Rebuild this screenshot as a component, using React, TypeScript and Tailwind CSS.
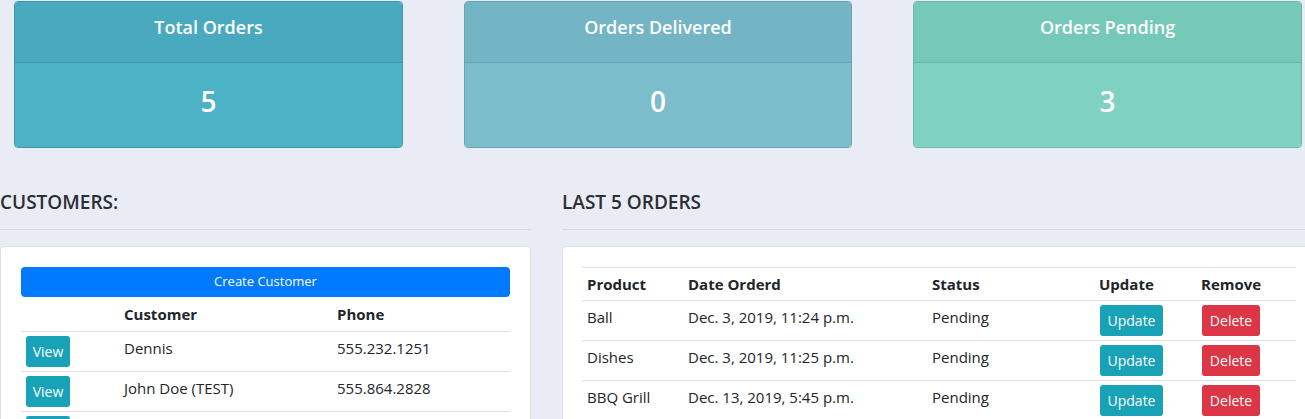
import React from "react";

const stats = [
  { title: "Total Orders", value: "5", w: "w-[389px]", head: "bg-[#49aabf]", body: "bg-[#4cb2c5]", border: "border-[#3f97ab]" },
  { title: "Orders Delivered", value: "0", w: "w-[388px]", head: "bg-[#74b5c5]", body: "bg-[#7bbdca]", border: "border-[#68a5b4]" },
  { title: "Orders Pending", value: "3", w: "w-[389px]", head: "bg-[#76c8b9]", body: "bg-[#7fd1c1]", border: "border-[#6bb8aa]" },
];

const customers = [
  { name: "Dennis", phone: "555.232.1251" },
  { name: "John Doe (TEST)", phone: "555.864.2828" },
  { name: "", phone: "" },
];

const orders = [
  { product: "Ball", date: "Dec. 3, 2019, 11:24 p.m.", status: "Pending" },
  { product: "Dishes", date: "Dec. 3, 2019, 11:25 p.m.", status: "Pending" },
  { product: "BBQ Grill", date: "Dec. 13, 2019, 5:45 p.m.", status: "Pending" },
];

export default function App() {
  return (
    <div
      className="w-[1305px] h-[419px] overflow-hidden bg-[#e9ecf4] text-[#212529]"
      style={{ fontFamily: '"Open Sans", "Noto Sans", sans-serif' }}
    >
      <div className="flex gap-[61px] pl-[14px] pt-[1px]">
        {stats.map((s) => (
          <div
            key={s.title}
            className={`${s.w} h-[147px] rounded-[4px] border ${s.border} overflow-hidden flex flex-col text-white`}
          >
            <div className={`${s.head} h-[61px] border-b ${s.border} flex justify-center pt-[12px]`}>
              <span className="text-[18px] font-semibold leading-[26px]">{s.title}</span>
            </div>
            <div className={`${s.body} flex-1 flex justify-center pt-[18px]`}>
              <span className="text-[28px] font-semibold leading-[40px]">{s.value}</span>
            </div>
          </div>
        ))}
      </div>

      <div className="flex gap-[31px] mt-[40px] w-[1340px]">
        <div className="w-[531px] shrink-0">
          <h5 className="text-[19px] font-semibold leading-[26px] pt-[1px] text-[#2b2e33]">CUSTOMERS:</h5>
          <div className="h-px bg-[#d6d9e0] mt-[14px] mb-[16px]" />
          <div className="bg-white border border-[#dfe1e6] rounded-[4px] h-[200px] px-[20px] pt-[20px]">
            <div className="h-[30px] rounded-[4px] bg-[#007bff] text-white text-[13px] flex items-center justify-center">
              Create Customer
            </div>
            <table className="w-full border-collapse text-[15px]">
              <thead>
                <tr className="h-[34px] text-left">
                  <th className="w-[99px]"></th>
                  <th className="w-[213px] pl-[4px] font-bold">Customer</th>
                  <th className="pl-[4px] font-bold">Phone</th>
                </tr>
              </thead>
              <tbody>
                {customers.map((c, i) => (
                  <tr key={i} className="h-[40px] border-t border-[#dee2e6] align-top">
                    <td className="pl-[5px] pt-[4px]">
                      <span className="inline-flex items-center justify-center w-[44px] h-[31px] rounded-[3px] bg-[#17a2b8] text-white text-[14px]">
                        View
                      </span>
                    </td>
                    <td className="pl-[4px] pt-[5px]">{c.name}</td>
                    <td className="pl-[4px] pt-[5px]">{c.phone}</td>
                  </tr>
                ))}
              </tbody>
            </table>
          </div>
        </div>

        <div className="flex-1">
          <h5 className="text-[19px] font-semibold leading-[26px] pt-[1px] text-[#2b2e33]">LAST 5 ORDERS</h5>
          <div className="h-px bg-[#d6d9e0] mt-[14px] mb-[16px]" />
          <div className="bg-white border border-[#dfe1e6] rounded-[4px] h-[200px] pl-[19px] pt-[20px]">
            <table className="w-[713px] border-collapse text-[15px] border-t border-[#dee2e6]">
              <thead>
                <tr className="h-[33px] text-left">
                  <th className="w-[101px] pl-[5px] font-bold">Product</th>
                  <th className="w-[244px] pl-[5px] font-bold">Date Orderd</th>
                  <th className="w-[167px] pl-[5px] font-bold">Status</th>
                  <th className="w-[102px] pl-[5px] font-bold">Update</th>
                  <th className="pl-[5px] font-bold">Remove</th>
                </tr>
              </thead>
              <tbody>
                {orders.map((o, i) => (
                  <tr key={i} className="h-[40px] border-t border-[#dee2e6] align-top">
                    <td className="pl-[5px] pt-[5px]">{o.product}</td>
                    <td className="pl-[5px] pt-[5px]">{o.date}</td>
                    <td className="pl-[5px] pt-[5px]">{o.status}</td>
                    <td className="pl-[6px] pt-[4px]">
                      <span className="inline-flex items-center justify-center w-[63px] h-[31px] rounded-[3px] bg-[#17a2b8] text-white text-[14px]">
                        Update
                      </span>
                    </td>
                    <td className="pl-[6px] pt-[4px]">
                      <span className="inline-flex items-center justify-center w-[58px] h-[31px] rounded-[3px] bg-[#dc3545] text-white text-[14px]">
                        Delete
                      </span>
                    </td>
                  </tr>
                ))}
              </tbody>
            </table>
          </div>
        </div>
      </div>
    </div>
  );
}
